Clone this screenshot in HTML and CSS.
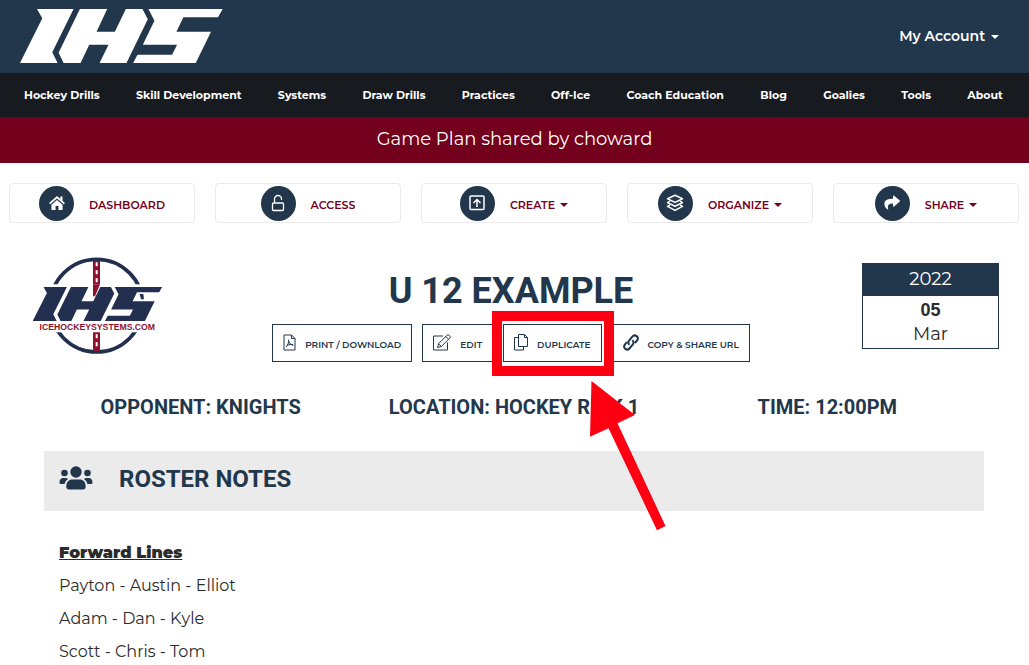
FILE: index.html
```html
<!DOCTYPE html>
<html lang="en">
  <head>
    <meta charset="UTF-8" />
    <meta name="viewport" content="width=device-width, initial-scale=1.0" />
    <title>U 12 Example - Game Plan</title>
    <link rel="stylesheet" href="styles.css">
  </head>
  <body>
    <!-- IHS mark, used in the header and in the team emblem -->
    <svg class="defs" width="0" height="0" aria-hidden="true">
      <symbol id="ihs" viewBox="60 27 610 162" preserveAspectRatio="none">
        <path d="M111 27H221L157 157L173 189H60L127 55Z" />
        <path d="M240 27H322L290 95H345L378 27H428L444 58L380 189H299L326 134H268L242 189H191L176 158Z" />
        <path d="M446 27H669L655 52H551L530 95H634L588 189H400L413 164H517L532 134H429L464 62Z" />
      </symbol>
    </svg>

    <header class="site-header">
      <a href="#" class="brand" aria-label="IHS home">
        <svg width="203" height="54"><use href="#ihs" width="203" height="54" /></svg>
      </a>
      <button type="button" class="account">My Account <span class="caret"></span></button>
    </header>

    <nav class="main-nav">
      <a href="#">Hockey Drills</a>
      <a href="#">Skill Development</a>
      <a href="#">Systems</a>
      <a href="#">Draw Drills</a>
      <a href="#">Practices</a>
      <a href="#">Off-Ice</a>
      <a href="#">Coach Education</a>
      <a href="#">Blog</a>
      <a href="#">Goalies</a>
      <a href="#">Tools</a>
      <a href="#">About</a>
    </nav>

    <div class="banner">Game Plan shared by choward</div>

    <div class="toolbar">
      <a href="#" class="tool">
        <span class="circle">
          <svg width="16" height="14" viewBox="0 0 16 14" fill="#fff">
            <path d="M8 4L13.6 8.7V13.4a.6.6 0 0 1-.6.6H9.4V10H6.6v4H3a.6.6 0 0 1-.6-.6V8.7Z" />
            <path d="M11.3 .5h2.2v4.600l-2.2-1.800Z" />
            <path d="M.6 7.6L8 1.3l7.4 6.3" fill="none" stroke="#fff" stroke-width="1.8" />
          </svg>
        </span>
        <span class="label">DASHBOARD</span>
      </a>
      <a href="#" class="tool">
        <span class="circle">
          <svg width="14" height="18" viewBox="0 0 14 18" fill="none" stroke="#fff" stroke-width="1.3">
            <rect x="1.5" y="9" width="11" height="7.5" rx="1" />
            <path d="M3.5 9V5a3.5 3.5 0 0 1 7 0v1" />
          </svg>
        </span>
        <span class="label">ACCESS</span>
      </a>
      <button type="button" class="tool">
        <span class="circle">
          <svg width="16" height="16" viewBox="0 0 16 16" fill="none" stroke="#fff" stroke-width="1.5">
            <rect x="1" y="1" width="14" height="13.5" rx="1" />
            <path d="M8 12V4.5M4.5 8L8 4.5L11.5 8" />
          </svg>
        </span>
        <span class="label">CREATE <span class="caret"></span></span>
      </button>
      <button type="button" class="tool">
        <span class="circle">
          <svg width="18" height="18" viewBox="0 0 18 18" fill="none" stroke="#fff" stroke-width="1.5" stroke-linejoin="round">
            <path d="M9 1.2L16.5 4.8L9 8.4L1.5 4.8Z" />
            <path d="M4 7.2L1.5 8.6L9 12.2L16.5 8.6L14 7.2" />
            <path d="M4 11L1.5 12.4L9 16.4L16.5 12.4L14 11" />
          </svg>
        </span>
        <span class="label">ORGANIZE <span class="caret"></span></span>
      </button>
      <button type="button" class="tool">
        <span class="circle">
          <svg width="18" height="16" viewBox="0 0 18 16" fill="#fff">
            <path d="M10 1.2c0-.7.7-.9 1.1-.5l5.7 4.8c.4.3.4.7 0 1l-5.7 4.9c-.4.4-1.1.1-1.1-.5V8.5C5.7 8.5 4.3 10 5.2 14c.1.6-.4.8-.8.4C2.6 13 1.4 11 1.4 9 1.4 4.8 5.4 3.8 10 3.8Z" />
          </svg>
        </span>
        <span class="label">SHARE <span class="caret"></span></span>
      </button>
    </div>

    <main class="plan">
      <section class="plan-head">
        <svg class="emblem" width="157" height="120" viewBox="9 0 471 360" role="img" aria-label="icehockeysystems.com">
          <circle cx="230" cy="182" r="139" fill="#fff" stroke="#232f4f" stroke-width="11" />
          <path d="M219 48h21v270h-21Z" fill="#8c1230" />
          <path d="M230 52v264" stroke="#fff" stroke-width="6" stroke-dasharray="12 12" />
          <path d="M60 118H440L412 228L414 262H45L28 232Z" fill="#fff" />
          <path d="M219 118h21l-15 36h-6Z" fill="#8c1230" />
          <path d="M359 147h11l2 16h-9Z" fill="#232f4f" />
          <use href="#ihs" x="38" y="126" width="389" height="102" fill="#232f4f" />
          <text x="232" y="255" text-anchor="middle" class="emblem-text">ICEHOCKEYSYSTEMS.COM</text>
        </svg>

        <div class="plan-title">
          <h1>U 12 EXAMPLE</h1>
          <div class="actions">
            <button type="button" class="action">
              <svg width="13" height="17" viewBox="0 0 13 17">
                <path d="M1 1H8.5L12 4.5V16H1ZM8.5 1V4.5H12" />
                <path d="M5.7 5.5C6 9 4.5 11.5 3 13M5.9 7.5C6.5 9.5 8 11 10.5 11.3M4 11.5C6 10.5 8 10.2 10 10.5" />
              </svg>
              <span>PRINT / DOWNLOAD</span>
            </button>
            <button type="button" class="action">
              <svg width="18" height="17" viewBox="0 0 18 17">
                <path d="M10 2H.5V16H14.5V8.5" />
                <path d="M4.5 13.5L5.6 9.7L14.2 1.1Q15 .4 15.8 1.1L17 2.3Q17.700 3.100 17 3.900L8.300 12.500ZM12.800 2.500L15.500 5.300M5.600 9.700L8.300 12.500" />
              </svg>
              <span>EDIT</span>
            </button>
            <div class="spotlight">
              <button type="button" class="action">
                <svg width="14" height="17" viewBox="0 0 14 17">
                  <path d="M4.5 .5H10.5L13.5 3.5V12.5H4.5ZM10.5 .5V3.5H13.5" />
                  <path d="M4.5 3.5H.5V16H9.5V12.5" />
                </svg>
                <span>DUPLICATE</span>
              </button>
              <svg class="arrow" width="76" height="151" viewBox="0 0 76 151">
                <path d="M1.5 1L45 35L27.5 43.2L75.5 146L67 150.3L18.5 48.2L0 56.7Z" />
              </svg>
            </div>
            <button type="button" class="action">
              <svg width="16" height="17" viewBox="0 0 16 17" stroke-width="2">
                <path d="M6.5 10.8C5 9.5 5 7.7 6.2 6.3L9.6 2.4C12 -.2 16.3 3 14.3 6.2L12 9" />
                <path d="M9.3 6.2C10.9 7.5 10.9 9.3 9.7 10.7L6.4 14.5C4 17.2-.3 14 1.7 10.8L3.9 8" />
              </svg>
              <span>COPY &amp; SHARE URL</span>
            </button>
          </div>
        </div>

        <time class="date" datetime="2022-03-05">
          <span class="year">2022</span>
          <span class="day">05</span>
          <span class="month">Mar</span>
        </time>
      </section>

      <section class="details">
        <h2>OPPONENT: KNIGHTS</h2>
        <h2>LOCATION: HOCKEY RINK 1</h2>
        <h2>TIME: 12:00PM</h2>
      </section>

      <section class="notes">
        <div class="notes-bar">
          <svg width="34" height="24" viewBox="0 0 34 24" fill="#22374c">
            <circle cx="17" cy="6" r="5.7" />
            <circle cx="5.5" cy="7" r="3.3" />
            <circle cx="28.5" cy="7" r="3.3" />
            <path d="M7.3 20.5c0-4.5 2.7-7 6-7h7.4c3.3 0 6 2.5 6 7 0 2-1 3-2.7 3H10c-1.7 0-2.7-1-2.7-3Z" />
            <path d="M.5 16.5C.5 13.5 2 12 4.2 12h2.6c.9 0 1.7.3 2.3.9C7.2 14.1 6 15.8 5.6 18H2C1 18 .5 17.5.5 16.5Z" />
            <path d="M33.5 16.5C33.5 13.5 32 12 29.8 12h-2.6c-.9 0-1.7.3-2.3.9 1.9 1.2 3.1 2.9 3.5 5.1H32c1 0 1.5-.5 1.5-1.5Z" />
          </svg>
          <h2>ROSTER NOTES</h2>
        </div>
        <div class="notes-body">
          <h3>Forward Lines</h3>
          <p>Payton - Austin - Elliot</p>
          <p>Adam - Dan - Kyle</p>
          <p>Scott - Chris - Tom</p>
        </div>
      </section>
    </main>
  </body>
</html>
```
FILE: styles.css
```css
* {
  margin: 0;
  padding: 0;
  box-sizing: border-box;
}
body {
  font-family: Montserrat, Inter, sans-serif;
  font-size: 16px;
  line-height: 24px;
  color: #2b2b2b;
  background: #fff;
}
a {
  color: inherit;
  text-decoration: none;
}
button {
  font: inherit;
  color: inherit;
  background: none;
  border: 0;
  cursor: pointer;
}
svg {
  display: block;
  flex: none;
}
.defs {
  position: absolute;
}
.caret {
  display: inline-block;
  border: 4px solid transparent;
  border-top-color: currentColor;
  border-bottom: 0;
  margin-left: 2px;
  vertical-align: 2px;
}

.site-header {
  display: flex;
  justify-content: space-between;
  align-items: center;
  height: 73px;
  padding: 0 30px 2px 20px;
  background: #22374c;
}
.brand {
  fill: #fff;
}
.account {
  font-size: 14px;
  font-weight: 600;
  color: #fff;
}

.main-nav {
  display: flex;
  justify-content: space-between;
  align-items: center;
  height: 44px;
  padding: 0 26px 0 24px;
  background: #171a1e;
  color: #fff;
  font-size: 11px;
  font-weight: 700;
  white-space: nowrap;
}

.banner {
  padding: 10px 0 12px;
  background: #73001c;
  color: #fff;
  font-size: 18px;
  text-align: center;
}

.toolbar {
  display: grid;
  grid-template-columns: repeat(5, 1fr);
  gap: 20px;
  padding: 20px 10px 0 9px;
}
.tool {
  display: flex;
  justify-content: center;
  align-items: center;
  gap: 15px;
  height: 40px;
  border: 1px solid #ebebeb;
  border-radius: 4px;
  color: #73001c;
  font-size: 11px;
  font-weight: 600;
}
.tool .label {
  padding-top: 3px;
}
.circle {
  display: flex;
  justify-content: center;
  align-items: center;
  width: 35px;
  height: 35px;
  border-radius: 50%;
  background: #22374c;
}

h1,
h2 {
  font-family: Roboto, sans-serif;
  font-weight: 700;
  color: #22374c;
}
.plan-head {
  display: grid;
  grid-template-columns: 1fr auto 1fr;
  padding: 22px 30px 0 23px;
}
.emblem-text {
  font-family: "Liberation Sans", sans-serif;
  font-size: 26px;
  font-weight: 700;
  fill: #8c1230;
}
.plan-title {
  padding-top: 22px;
  text-align: center;
}
h1 {
  font-size: 36px;
  line-height: 48px;
}
.actions {
  display: flex;
  justify-content: center;
  gap: 10px;
  margin-top: 9px;
}
.action {
  display: flex;
  align-items: center;
  gap: 9px;
  height: 38px;
  padding: 0 10px 2px;
  border: 1px solid #22374c;
  color: #22374c;
  font-size: 9px;
  font-weight: 600;
  line-height: 12px;
  white-space: nowrap;
}
.action span {
  padding-top: 5px;
}
.action svg {
  fill: none;
  stroke: currentColor;
}
.spotlight {
  position: relative;
}
/* red box and arrow pointing at the button */
.spotlight::after {
  content: "";
  position: absolute;
  inset: -13px -12px -14px -11px;
  border: 10px solid #ff0013;
  pointer-events: none;
}
.arrow {
  position: absolute;
  top: 56px;
  left: 87px;
  fill: #ff0013;
  pointer-events: none;
  z-index: 1;
}
.date {
  display: flex;
  flex-direction: column;
  justify-self: end;
  align-self: start;
  width: 137px;
  margin-top: 18px;
  border: 1px solid #22374c;
  font-size: 18px;
  text-align: center;
}
.year {
  padding: 3px 0 5px;
  background: #22374c;
  color: #fff;
}
.day {
  padding-top: 2px;
  font-family: "Liberation Sans", sans-serif;
  font-weight: 700;
}
.month {
  padding-bottom: 2px;
}

.details {
  display: grid;
  grid-template-columns: repeat(3, 1fr);
  margin: 30px 45px 0 44px;
  text-align: center;
}
.details h2 {
  font-size: 20px;
  white-space: nowrap;
}

.notes {
  margin: 32px 45px 0 44px;
}
.notes-bar {
  display: flex;
  align-items: center;
  gap: 26px;
  height: 60px;
  padding: 0 15px 7px;
  background: #ebebeb;
}
.notes-bar h2 {
  padding-top: 2px;
  font-size: 24px;
}
.notes-body {
  padding: 30px 15px 0;
}
.notes-body h3 {
  font-size: 16px;
  font-weight: 900;
  text-decoration: underline;
}
.notes-body p {
  margin-top: 9px;
}
```
